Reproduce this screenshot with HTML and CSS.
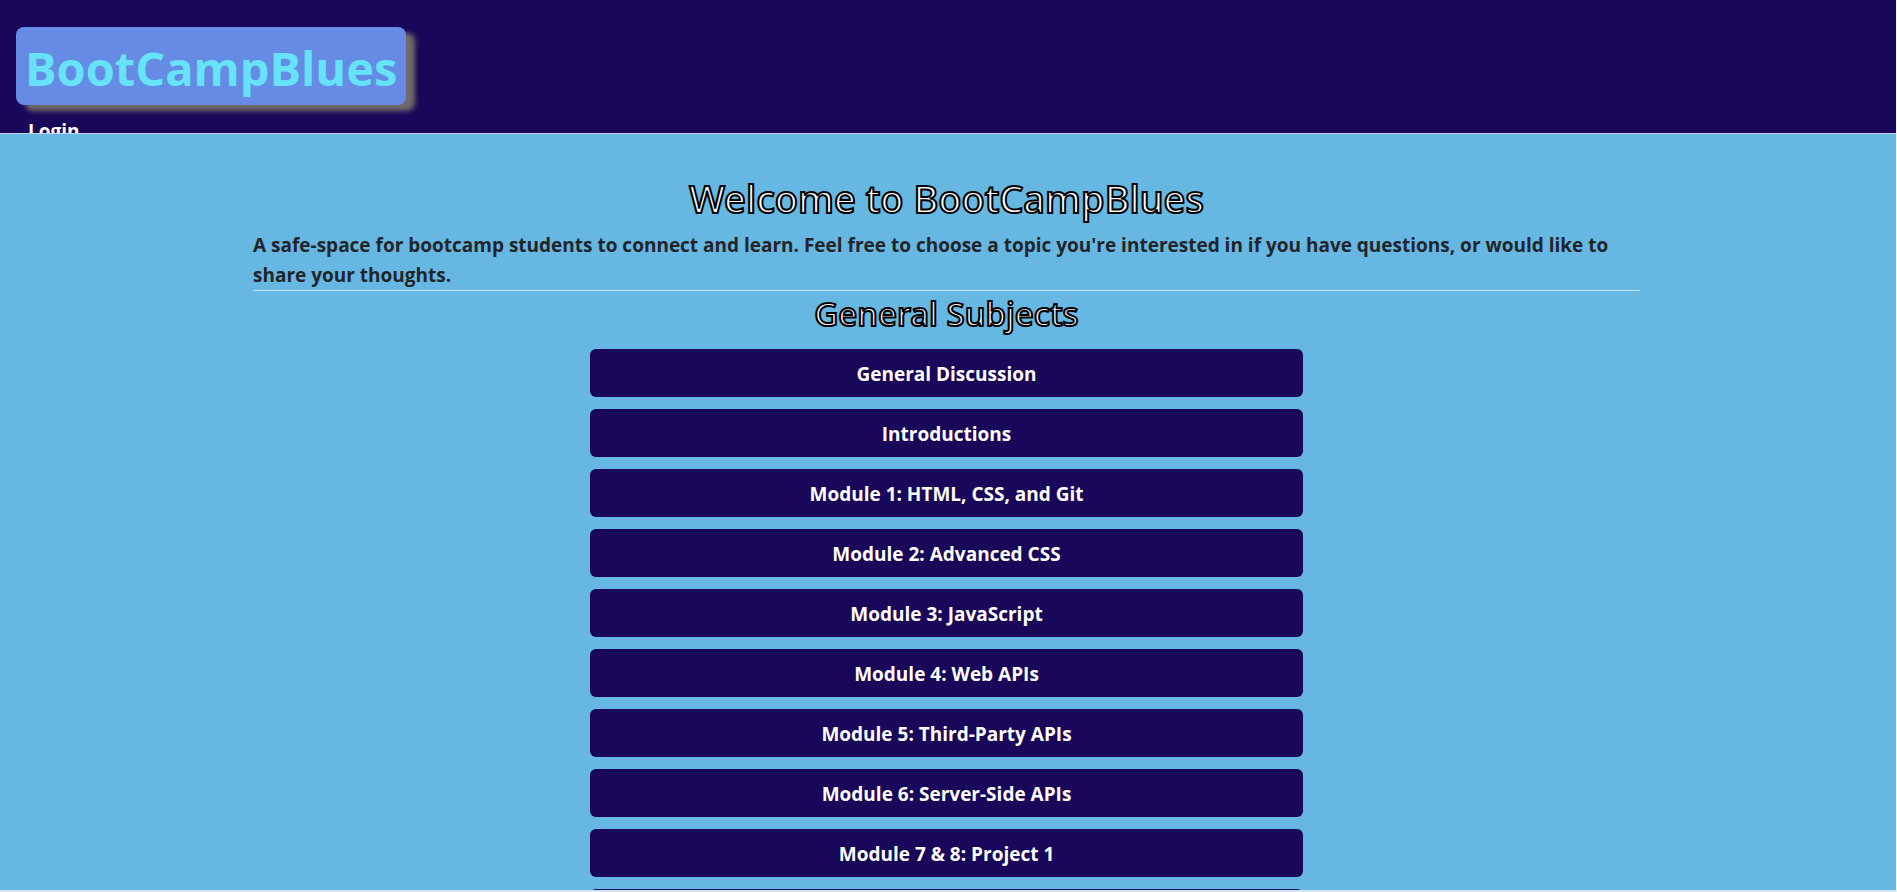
FILE: index.html
```
<!DOCTYPE html>
<html lang="en">
<head>
<meta charset="utf-8">
<title>BootCampBlues</title>
<link rel="stylesheet" href="styles.css">
</head>
<body>
<header class="site-header">
  <a class="brand" href="#">BootCampBlues</a>
  <nav class="site-nav"><a class="nav-link" href="#">Login</a></nav>
</header>
<main class="content">
  <div class="container">
    <h1 class="title">Welcome to BootCampBlues</h1>
    <p class="intro">A safe-space for bootcamp students to connect and learn. Feel free to choose a topic you're interested in if you have questions, or would like to share your thoughts.</p>
    <section class="subjects">
      <h2 class="subtitle">General Subjects</h2>
      <div class="topics">
        <button class="topic" type="button">General Discussion</button>
        <button class="topic" type="button">Introductions</button>
        <button class="topic" type="button">Module 1: HTML, CSS, and Git</button>
        <button class="topic" type="button">Module 2: Advanced CSS</button>
        <button class="topic" type="button">Module 3: JavaScript</button>
        <button class="topic" type="button">Module 4: Web APIs</button>
        <button class="topic" type="button">Module 5: Third-Party APIs</button>
        <button class="topic" type="button">Module 6: Server-Side APIs</button>
        <button class="topic" type="button">Module 7 &amp; 8: Project 1</button>
        <button class="topic" type="button" aria-label="More topics"></button>
      </div>
    </section>
  </div>
</main>
</body>
</html>
```
FILE: styles.css
```
* { box-sizing: border-box; }

body {
  margin: 0;
  height: 100vh;
  display: flex;
  flex-direction: column;
  overflow: hidden;
  border-right: 1px solid #f2f8fc;
  border-bottom: 2px solid #d3e6f4;
  background: #66b7e1;
  color: #212529;
  font-family: "Open Sans", "Segoe UI", sans-serif;
  font-size: 19px;
  font-weight: 700;
  line-height: 30px;
}

.site-header {
  flex: none;
  display: flex;
  flex-direction: column;
  align-items: flex-start;
  height: 15vh;
  padding: 27px 16px 0;
  overflow: hidden;
  background: #190859;
  border-bottom: 1px solid #c4d3ea;
}

.brand {
  flex: none;
  padding: 5px 9px 1px;
  border-radius: 8px;
  background: #658be4;
  box-shadow: 9px 6px 5px #716a6a;
  color: #66e3f8;
  font-size: 47px;
  line-height: 72px;
  text-decoration: none;
}

.site-nav { padding: 11px 12px; }

.nav-link {
  color: #fff;
  text-decoration: none;
}

.content {
  flex: 1;
  min-height: 0;
  overflow: hidden;
  padding: 40px 3px 0 0;
}

.container {
  width: 1387px;
  max-width: 94%;
  margin: 0 auto;
}

.title,
.subtitle {
  margin: 0;
  color: #fff;
  font-family: "Noto Sans", "Segoe UI", sans-serif;
  font-weight: 500;
  text-align: center;
  -webkit-text-stroke: 2px #000;
}

.title {
  padding-bottom: 8px;
  font-size: 38px;
  line-height: 48px;
}

.subtitle {
  padding-bottom: 12px;
  font-size: 33px;
  line-height: 46px;
}

.intro { margin: 0; }

.subjects { border-top: 1px solid #d0e8f5; }

.topics {
  display: flex;
  flex-direction: column;
  gap: 12px;
  width: 713px;
  max-width: 100%;
  margin: 0 auto;
}

.topic {
  min-height: 48px;
  padding: 10px 12px 8px;
  border: 0;
  border-radius: 6px;
  background: #190859;
  color: #fff;
  font: inherit;
}
```
